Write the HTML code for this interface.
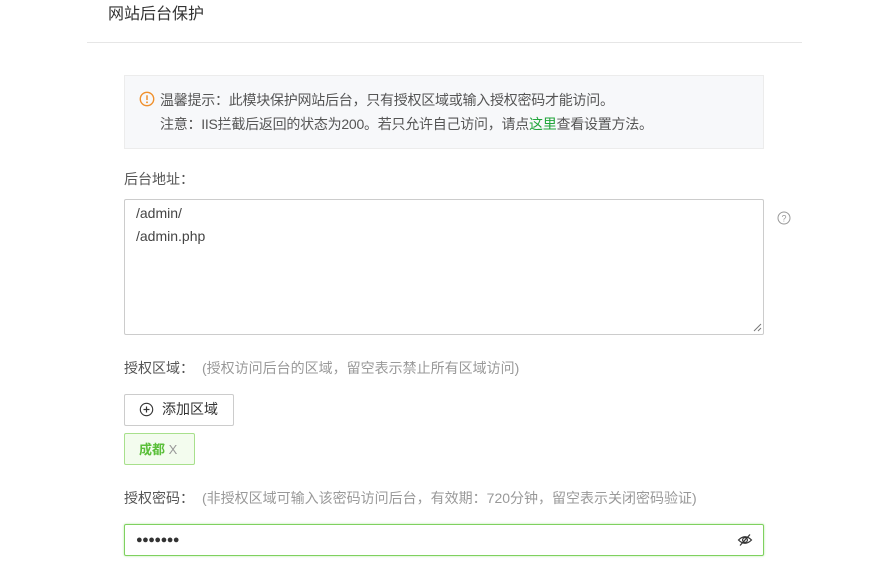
<!DOCTYPE html>
<html><head><meta charset="utf-8"><style>
*{margin:0;padding:0;box-sizing:border-box}
body{width:895px;height:564px;background:#fff;position:relative;overflow:hidden;font-family:"Liberation Sans","Noto Sans CJK SC",sans-serif;color:#555;font-size:14px}
.a{position:absolute;white-space:nowrap}
</style></head><body>
<div class="a" style="left:108px;top:5px;font-size:16px;color:#333;line-height:20px">网站后台保护</div>
<div class="a" style="left:87px;top:42px;width:715px;height:1px;background:#e6e6e6"></div>
<div class="a" style="left:124px;top:75px;width:640px;height:74px;background:#f7f8fa;border:1px solid #ececec"></div>
<svg class="a" style="left:139px;top:91px" width="16" height="16" viewBox="0 0 15 15"><circle cx="7.5" cy="7.5" r="6.3" fill="none" stroke="#f0902c" stroke-width="1.3"/><line x1="7.5" y1="4" x2="7.5" y2="8.5" stroke="#f0902c" stroke-width="1.4"/><circle cx="7.5" cy="10.6" r="0.9" fill="#f0902c"/></svg>
<div class="a" style="left:160px;top:90px;line-height:20px;color:#555;letter-spacing:-0.25px">温馨提示：此模块保护网站后台，只有授权区域或输入授权密码才能访问。</div>
<div class="a" style="left:160px;top:114px;line-height:20px;color:#555;letter-spacing:-0.25px">注意：IIS拦截后返回的状态为200。若只允许自己访问，请点<span style="color:#20a53a">这里</span>查看设置方法。</div>
<div class="a" style="left:124px;top:169px;line-height:20px;color:#555">后台地址：</div>
<div class="a" style="left:124px;top:199px;width:640px;height:136px;border:1px solid #ccc;border-radius:2px"></div>
<div class="a" style="left:136px;top:202px;line-height:23px;color:#444;font-size:14px">/admin/<br>/admin.php</div>
<svg class="a" style="left:752px;top:322px" width="10" height="10"><line x1="2" y1="9" x2="9" y2="2" stroke="#777"/><line x1="6" y1="9" x2="9" y2="6" stroke="#777"/></svg>
<svg class="a" style="left:777px;top:211px" width="14" height="14" viewBox="0 0 14 14"><circle cx="7" cy="7" r="6" fill="none" stroke="#999"/><text x="7" y="10.5" font-size="9" text-anchor="middle" fill="#999" font-family="Liberation Sans">?</text></svg>
<div class="a" style="left:124px;top:358px;line-height:20px;color:#555">授权区域：<span style="color:#999;margin-left:8px">(授权访问后台的区域，留空表示禁止所有区域访问)</span></div>
<div class="a" style="left:124px;top:394px;width:110px;height:32px;border:1px solid #ccc;border-radius:2px"></div>
<svg class="a" style="left:139px;top:402px" width="15" height="15" viewBox="0 0 15 15"><circle cx="7.5" cy="7.5" r="6.2" fill="none" stroke="#333" stroke-width="1.1"/><line x1="7.5" y1="4.5" x2="7.5" y2="10.5" stroke="#333" stroke-width="1.2"/><line x1="4.5" y1="7.5" x2="10.5" y2="7.5" stroke="#333" stroke-width="1.2"/></svg>
<div class="a" style="left:162px;top:399px;line-height:20px;color:#333;font-size:14px">添加区域</div>
<div class="a" style="left:124px;top:433px;width:71px;height:32px;border:1px solid #a8e08c;background:#f3fcee;border-radius:2px"></div>
<div class="a" style="left:139px;top:440px;line-height:20px;font-size:13px;color:#5bbf3a;font-weight:bold">成都 <span style="color:#999;font-weight:normal">X</span></div>
<div class="a" style="left:124px;top:488px;line-height:20px;color:#555">授权密码：<span style="color:#999;margin-left:8px">(非授权区域可输入该密码访问后台，有效期：720分钟，留空表示关闭密码验证)</span></div>
<div class="a" style="left:124px;top:524px;width:640px;height:32px;border:1px solid #7fd160;box-shadow:0 0 2px #b6e8a3;border-radius:2px"></div>
<div class="a" style="left:136px;top:531px;line-height:18px;color:#333;font-size:11px;letter-spacing:-0.5px">●●●●●●●</div>
<svg class="a" style="left:737px;top:532px" width="16" height="16" viewBox="0 0 16 16"><path d="M1.5 8 Q8 1.5 14.5 8 Q8 14.5 1.5 8Z" fill="none" stroke="#333" stroke-width="1.2"/><circle cx="8" cy="8" r="2.4" fill="none" stroke="#333" stroke-width="1.2"/><line x1="3" y1="13.5" x2="13" y2="2.5" stroke="#333" stroke-width="1.2"/></svg>
</body></html>
